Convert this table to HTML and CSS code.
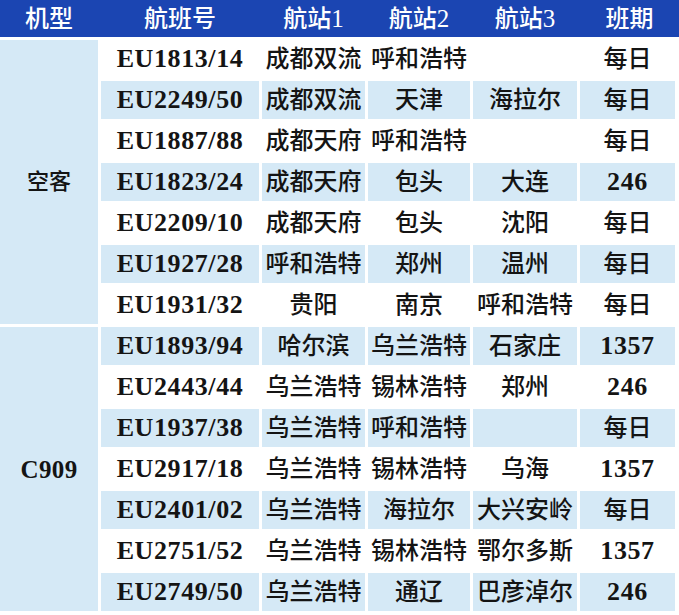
FILE: index.html
```html
<!DOCTYPE html>
<html lang="zh">
<head>
<meta charset="utf-8">
<link rel="stylesheet" href="styles.css">
</head>
<body>
<div class="sheet">
  <div class="head">
    <div class="hc">机型</div>
    <div class="hc">航班号</div>
    <div class="hc">航站<span class="hnum">1</span></div>
    <div class="hc">航站<span class="hnum">2</span></div>
    <div class="hc">航站<span class="hnum">3</span></div>
    <div class="hc">班期</div>
  </div>
  <div class="grid">
    <div class="type g1">空客</div>
    <div class="c"><span class="num">EU1813/14</span></div><div class="c">成都双流</div><div class="c">呼和浩特</div><div class="c"></div><div class="c">每日</div>
    <div class="c alt"><span class="num">EU2249/50</span></div><div class="c alt">成都双流</div><div class="c alt">天津</div><div class="c alt">海拉尔</div><div class="c alt">每日</div>
    <div class="c"><span class="num">EU1887/88</span></div><div class="c">成都天府</div><div class="c">呼和浩特</div><div class="c"></div><div class="c">每日</div>
    <div class="c alt"><span class="num">EU1823/24</span></div><div class="c alt">成都天府</div><div class="c alt">包头</div><div class="c alt">大连</div><div class="c alt"><span class="num">246</span></div>
    <div class="c"><span class="num">EU2209/10</span></div><div class="c">成都天府</div><div class="c">包头</div><div class="c">沈阳</div><div class="c">每日</div>
    <div class="c alt"><span class="num">EU1927/28</span></div><div class="c alt">呼和浩特</div><div class="c alt">郑州</div><div class="c alt">温州</div><div class="c alt">每日</div>
    <div class="c"><span class="num">EU1931/32</span></div><div class="c">贵阳</div><div class="c">南京</div><div class="c">呼和浩特</div><div class="c">每日</div>
    <div class="type g2"><span class="num tnum">C909</span></div>
    <div class="c alt"><span class="num">EU1893/94</span></div><div class="c alt">哈尔滨</div><div class="c alt">乌兰浩特</div><div class="c alt">石家庄</div><div class="c alt"><span class="num">1357</span></div>
    <div class="c"><span class="num">EU2443/44</span></div><div class="c">乌兰浩特</div><div class="c">锡林浩特</div><div class="c">郑州</div><div class="c"><span class="num">246</span></div>
    <div class="c alt"><span class="num">EU1937/38</span></div><div class="c alt">乌兰浩特</div><div class="c alt">呼和浩特</div><div class="c alt"></div><div class="c alt">每日</div>
    <div class="c"><span class="num">EU2917/18</span></div><div class="c">乌兰浩特</div><div class="c">锡林浩特</div><div class="c">乌海</div><div class="c"><span class="num">1357</span></div>
    <div class="c alt"><span class="num">EU2401/02</span></div><div class="c alt">乌兰浩特</div><div class="c alt">海拉尔</div><div class="c alt">大兴安岭</div><div class="c alt">每日</div>
    <div class="c"><span class="num">EU2751/52</span></div><div class="c">乌兰浩特</div><div class="c">锡林浩特</div><div class="c">鄂尔多斯</div><div class="c"><span class="num">1357</span></div>
    <div class="c alt"><span class="num">EU2749/50</span></div><div class="c alt">乌兰浩特</div><div class="c alt">通辽</div><div class="c alt">巴彦淖尔</div><div class="c alt"><span class="num">246</span></div>
  </div>
</div>
</body>
</html>
```
FILE: styles.css
```css
html, body {
  margin: 0;
  padding: 0;
  background: #ffffff;
}
.sheet {
  width: 679px;
  font-family: "Liberation Serif", "Noto Sans CJK SC", serif;
  font-size: 24px;
  font-weight: 500;
  color: #141414;
}
.head {
  display: grid;
  grid-template-columns: 98px 158px 103px 102px 104px 99px;
  column-gap: 3px;
  height: 37px;
  background: #1b45b2;
  color: #ffffff;
  margin-bottom: 3px;
}
.hc {
  display: flex;
  align-items: center;
  justify-content: center;
  line-height: 1;
}
.hnum {
  font-family: "Liberation Serif", serif;
  font-weight: 400;
  font-size: 25px;
}
.grid {
  display: grid;
  grid-template-columns: 98px 158px 103px 102px 104px 95px;
  grid-auto-rows: 38px;
  gap: 3px;
}
.c, .type {
  display: flex;
  align-items: center;
  justify-content: center;
  line-height: 1;
  white-space: nowrap;
  background: #ffffff;
}
.c.alt, .type {
  background: #d5e9f6;
}
.g1 {
  grid-column: 1;
  grid-row: 1 / span 7;
  font-size: 22px;
}
.g2 {
  grid-column: 1;
  grid-row: 8 / span 7;
}
.num {
  font-family: "Liberation Serif", serif;
  font-weight: 700;
  font-size: 26px;
  letter-spacing: 0.6px;
}
.tnum {
  font-size: 25px;
  letter-spacing: 0.4px;
}
```
